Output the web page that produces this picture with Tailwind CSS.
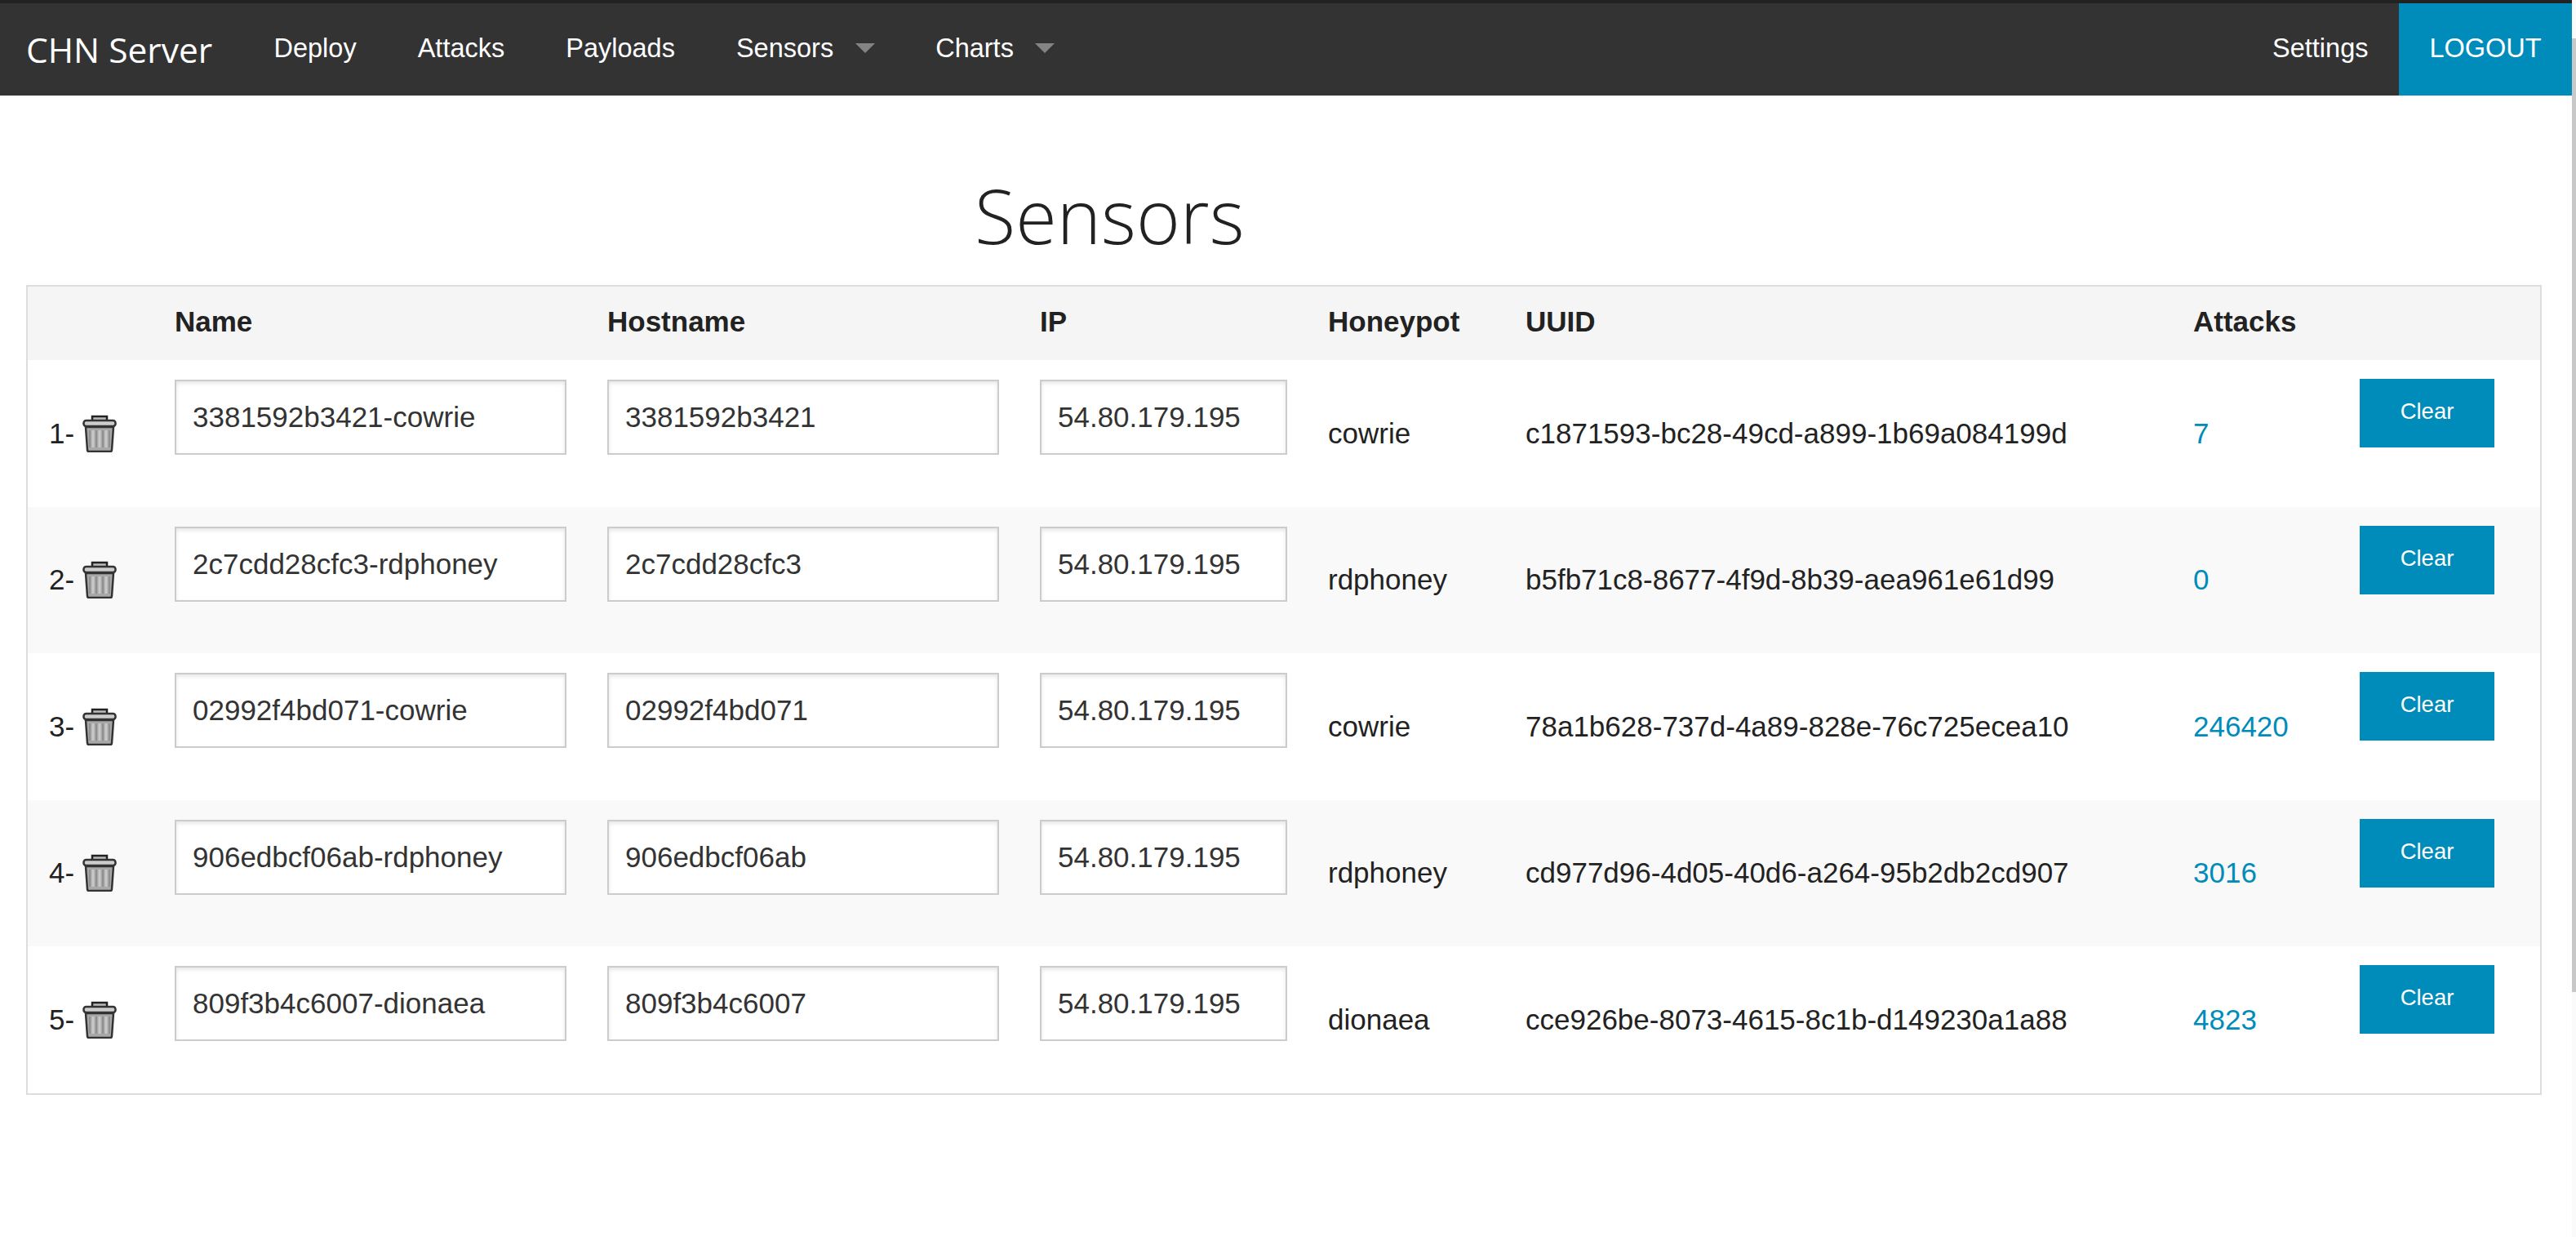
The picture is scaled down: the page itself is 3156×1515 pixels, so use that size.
<!DOCTYPE html>
<html><head><meta charset="utf-8"><title>CHN Server</title>
<script src="https://cdn.jsdelivr.net/npm/@tailwindcss/browser@4"></script></head>
<body class="bg-white font-['Liberation_Sans',Arial,sans-serif] text-[#222] h-[1515px] overflow-hidden relative">
<nav class="h-[117px] bg-[#333] border-t-[4px] border-[#222] flex items-stretch text-white text-[32.5px] pr-[5px]">
  <a class="pl-[32px] pr-[37px] flex items-center font-['Open_Sans',sans-serif] text-[42.5px] w-[298px] whitespace-nowrap">CHN Server</a>
  <a class="px-[37.5px] flex items-center pb-[2px]">Deploy</a>
  <a class="px-[37.5px] flex items-center pb-[2px]">Attacks</a>
  <a class="px-[37.5px] flex items-center pb-[2px]">Payloads</a>
  <a class="pl-[37.5px] pr-[87.5px] flex items-center pb-[2px] relative">Sensors<span class="absolute right-[37px] top-[49px] w-0 h-0 border-x-[12px] border-t-[12.5px] border-x-transparent border-t-white/40"></span></a>
  <a class="pl-[37.5px] pr-[87.5px] flex items-center pb-[2px] relative">Charts<span class="absolute right-[37px] top-[49px] w-0 h-0 border-x-[12px] border-t-[12.5px] border-x-transparent border-t-white/40"></span></a>
  <div class="ml-auto flex items-stretch">
    <a class="px-[37.5px] flex items-center pb-[2px]">Settings</a>
    <a class="w-[212px] bg-[#008cba] flex items-center justify-center pb-[2px]">LOGOUT</a>
  </div>
</nav>
<main class="pl-[32px] w-[3114px]">
  <h1 class="font-['Open_Sans',sans-serif] font-light text-[92px] leading-[150px] h-[232px] pt-[72px] pl-[1162px] text-[#222] whitespace-nowrap">Sensors</h1>
  <table class="table-fixed w-[3082px] border-2 border-[#ddd] text-[35px] text-[#222]">
    <colgroup><col class="w-[155px]"><col class="w-[530px]"><col class="w-[530px]"><col class="w-[353px]"><col class="w-[242px]"><col class="w-[818px]"><col class="w-[204px]"><col></colgroup>
    <thead class="bg-[#f5f5f5] font-bold">
      <tr class="h-[91px] text-left"><th></th><th class="pl-[26px] pb-[3px]">Name</th><th class="pl-[26px] pb-[3px]">Hostname</th><th class="pl-[26px] pb-[3px]">IP</th><th class="pl-[26px] pb-[3px]">Honeypot</th><th class="pl-[26px] pb-[3px]">UUID</th><th class="pl-[26px] pb-[3px]">Attacks</th><th></th></tr>
    </thead>
    <tbody>
      <tr class="h-[179.5px] bg-white">
        <td class="pl-[26px]"><span class="flex items-center gap-[10px]">1- <svg class="w-[42px] h-[46px] blur-[0.6px]" viewBox="0 0 42 46"><path d="M4 15H38L36 43Q36 45 34 45H8Q6 45 6 43Z" fill="#a8a8a8" stroke="#333" stroke-width="2.5"/><path d="M13 19V40M21 19V40M29 19V40" stroke="#c8c8c8" stroke-width="3"/><path d="M9 19V40M17 19V40M25 19V40M33 19V40" stroke="#888" stroke-width="1.5"/><path d="M12 7V2H30V7" fill="#bbb" stroke="#222" stroke-width="2.5"/><rect x="1.5" y="7" width="39" height="7" rx="3" fill="#ccc" stroke="#333" stroke-width="2.5"/></svg></span></td>
        <td class="pl-[26px] align-top pt-[24px]"><input value="3381592b3421-cowrie" class="block w-[480px] h-[92px] border-2 border-[#ccc] px-[20px] text-[35px] text-[#333] shadow-[inset_0_2.5px_5px_rgba(0,0,0,0.1)]"></td>
        <td class="pl-[26px] align-top pt-[24px]"><input value="3381592b3421" class="block w-[480px] h-[92px] border-2 border-[#ccc] px-[20px] text-[35px] text-[#333] shadow-[inset_0_2.5px_5px_rgba(0,0,0,0.1)]"></td>
        <td class="pl-[26px] align-top pt-[24px]"><input value="54.80.179.195" class="block w-[303px] h-[92px] border-2 border-[#ccc] px-[20px] text-[35px] text-[#333] shadow-[inset_0_2.5px_5px_rgba(0,0,0,0.1)]"></td>
        <td class="pl-[26px]">cowrie</td>
        <td class="pl-[26px]">c1871593-bc28-49cd-a899-1b69a084199d</td>
        <td class="pl-[26px] text-[#008cba]">7</td>
        <td class="pl-[26px] align-top pt-[23px]"><button class="block w-[165px] h-[84px] bg-[#008cba] text-white text-[27.5px] pb-[4px]">Clear</button></td>
      </tr>
      <tr class="h-[179.5px] bg-[#f9f9f9]">
        <td class="pl-[26px]"><span class="flex items-center gap-[10px]">2- <svg class="w-[42px] h-[46px] blur-[0.6px]" viewBox="0 0 42 46"><path d="M4 15H38L36 43Q36 45 34 45H8Q6 45 6 43Z" fill="#a8a8a8" stroke="#333" stroke-width="2.5"/><path d="M13 19V40M21 19V40M29 19V40" stroke="#c8c8c8" stroke-width="3"/><path d="M9 19V40M17 19V40M25 19V40M33 19V40" stroke="#888" stroke-width="1.5"/><path d="M12 7V2H30V7" fill="#bbb" stroke="#222" stroke-width="2.5"/><rect x="1.5" y="7" width="39" height="7" rx="3" fill="#ccc" stroke="#333" stroke-width="2.5"/></svg></span></td>
        <td class="pl-[26px] align-top pt-[24px]"><input value="2c7cdd28cfc3-rdphoney" class="block w-[480px] h-[92px] border-2 border-[#ccc] px-[20px] text-[35px] text-[#333] bg-white shadow-[inset_0_2.5px_5px_rgba(0,0,0,0.1)]"></td>
        <td class="pl-[26px] align-top pt-[24px]"><input value="2c7cdd28cfc3" class="block w-[480px] h-[92px] border-2 border-[#ccc] px-[20px] text-[35px] text-[#333] bg-white shadow-[inset_0_2.5px_5px_rgba(0,0,0,0.1)]"></td>
        <td class="pl-[26px] align-top pt-[24px]"><input value="54.80.179.195" class="block w-[303px] h-[92px] border-2 border-[#ccc] px-[20px] text-[35px] text-[#333] bg-white shadow-[inset_0_2.5px_5px_rgba(0,0,0,0.1)]"></td>
        <td class="pl-[26px]">rdphoney</td>
        <td class="pl-[26px]">b5fb71c8-8677-4f9d-8b39-aea961e61d99</td>
        <td class="pl-[26px] text-[#008cba]">0</td>
        <td class="pl-[26px] align-top pt-[23px]"><button class="block w-[165px] h-[84px] bg-[#008cba] text-white text-[27.5px] pb-[4px]">Clear</button></td>
      </tr>
      <tr class="h-[179.5px] bg-white">
        <td class="pl-[26px]"><span class="flex items-center gap-[10px]">3- <svg class="w-[42px] h-[46px] blur-[0.6px]" viewBox="0 0 42 46"><path d="M4 15H38L36 43Q36 45 34 45H8Q6 45 6 43Z" fill="#a8a8a8" stroke="#333" stroke-width="2.5"/><path d="M13 19V40M21 19V40M29 19V40" stroke="#c8c8c8" stroke-width="3"/><path d="M9 19V40M17 19V40M25 19V40M33 19V40" stroke="#888" stroke-width="1.5"/><path d="M12 7V2H30V7" fill="#bbb" stroke="#222" stroke-width="2.5"/><rect x="1.5" y="7" width="39" height="7" rx="3" fill="#ccc" stroke="#333" stroke-width="2.5"/></svg></span></td>
        <td class="pl-[26px] align-top pt-[24px]"><input value="02992f4bd071-cowrie" class="block w-[480px] h-[92px] border-2 border-[#ccc] px-[20px] text-[35px] text-[#333] shadow-[inset_0_2.5px_5px_rgba(0,0,0,0.1)]"></td>
        <td class="pl-[26px] align-top pt-[24px]"><input value="02992f4bd071" class="block w-[480px] h-[92px] border-2 border-[#ccc] px-[20px] text-[35px] text-[#333] shadow-[inset_0_2.5px_5px_rgba(0,0,0,0.1)]"></td>
        <td class="pl-[26px] align-top pt-[24px]"><input value="54.80.179.195" class="block w-[303px] h-[92px] border-2 border-[#ccc] px-[20px] text-[35px] text-[#333] shadow-[inset_0_2.5px_5px_rgba(0,0,0,0.1)]"></td>
        <td class="pl-[26px]">cowrie</td>
        <td class="pl-[26px]">78a1b628-737d-4a89-828e-76c725ecea10</td>
        <td class="pl-[26px] text-[#008cba]">246420</td>
        <td class="pl-[26px] align-top pt-[23px]"><button class="block w-[165px] h-[84px] bg-[#008cba] text-white text-[27.5px] pb-[4px]">Clear</button></td>
      </tr>
      <tr class="h-[179.5px] bg-[#f9f9f9]">
        <td class="pl-[26px]"><span class="flex items-center gap-[10px]">4- <svg class="w-[42px] h-[46px] blur-[0.6px]" viewBox="0 0 42 46"><path d="M4 15H38L36 43Q36 45 34 45H8Q6 45 6 43Z" fill="#a8a8a8" stroke="#333" stroke-width="2.5"/><path d="M13 19V40M21 19V40M29 19V40" stroke="#c8c8c8" stroke-width="3"/><path d="M9 19V40M17 19V40M25 19V40M33 19V40" stroke="#888" stroke-width="1.5"/><path d="M12 7V2H30V7" fill="#bbb" stroke="#222" stroke-width="2.5"/><rect x="1.5" y="7" width="39" height="7" rx="3" fill="#ccc" stroke="#333" stroke-width="2.5"/></svg></span></td>
        <td class="pl-[26px] align-top pt-[24px]"><input value="906edbcf06ab-rdphoney" class="block w-[480px] h-[92px] border-2 border-[#ccc] px-[20px] text-[35px] text-[#333] bg-white shadow-[inset_0_2.5px_5px_rgba(0,0,0,0.1)]"></td>
        <td class="pl-[26px] align-top pt-[24px]"><input value="906edbcf06ab" class="block w-[480px] h-[92px] border-2 border-[#ccc] px-[20px] text-[35px] text-[#333] bg-white shadow-[inset_0_2.5px_5px_rgba(0,0,0,0.1)]"></td>
        <td class="pl-[26px] align-top pt-[24px]"><input value="54.80.179.195" class="block w-[303px] h-[92px] border-2 border-[#ccc] px-[20px] text-[35px] text-[#333] bg-white shadow-[inset_0_2.5px_5px_rgba(0,0,0,0.1)]"></td>
        <td class="pl-[26px]">rdphoney</td>
        <td class="pl-[26px]">cd977d96-4d05-40d6-a264-95b2db2cd907</td>
        <td class="pl-[26px] text-[#008cba]">3016</td>
        <td class="pl-[26px] align-top pt-[23px]"><button class="block w-[165px] h-[84px] bg-[#008cba] text-white text-[27.5px] pb-[4px]">Clear</button></td>
      </tr>
      <tr class="h-[180.5px] bg-white">
        <td class="pl-[26px]"><span class="flex items-center gap-[10px]">5- <svg class="w-[42px] h-[46px] blur-[0.6px]" viewBox="0 0 42 46"><path d="M4 15H38L36 43Q36 45 34 45H8Q6 45 6 43Z" fill="#a8a8a8" stroke="#333" stroke-width="2.5"/><path d="M13 19V40M21 19V40M29 19V40" stroke="#c8c8c8" stroke-width="3"/><path d="M9 19V40M17 19V40M25 19V40M33 19V40" stroke="#888" stroke-width="1.5"/><path d="M12 7V2H30V7" fill="#bbb" stroke="#222" stroke-width="2.5"/><rect x="1.5" y="7" width="39" height="7" rx="3" fill="#ccc" stroke="#333" stroke-width="2.5"/></svg></span></td>
        <td class="pl-[26px] align-top pt-[24px]"><input value="809f3b4c6007-dionaea" class="block w-[480px] h-[92px] border-2 border-[#ccc] px-[20px] text-[35px] text-[#333] shadow-[inset_0_2.5px_5px_rgba(0,0,0,0.1)]"></td>
        <td class="pl-[26px] align-top pt-[24px]"><input value="809f3b4c6007" class="block w-[480px] h-[92px] border-2 border-[#ccc] px-[20px] text-[35px] text-[#333] shadow-[inset_0_2.5px_5px_rgba(0,0,0,0.1)]"></td>
        <td class="pl-[26px] align-top pt-[24px]"><input value="54.80.179.195" class="block w-[303px] h-[92px] border-2 border-[#ccc] px-[20px] text-[35px] text-[#333] shadow-[inset_0_2.5px_5px_rgba(0,0,0,0.1)]"></td>
        <td class="pl-[26px]">dionaea</td>
        <td class="pl-[26px]">cce926be-8073-4615-8c1b-d149230a1a88</td>
        <td class="pl-[26px] text-[#008cba]">4823</td>
        <td class="pl-[26px] align-top pt-[23px]"><button class="block w-[165px] h-[84px] bg-[#008cba] text-white text-[27.5px] pb-[4px]">Clear</button></td>
      </tr>
    </tbody>
  </table>
</main>
<div class="absolute right-0 top-0 w-[5px] h-[1515px] bg-[#fafafa]"><div class="mt-[47px] h-[1168px] bg-[#c8c8c8]"></div></div>
</body></html>
